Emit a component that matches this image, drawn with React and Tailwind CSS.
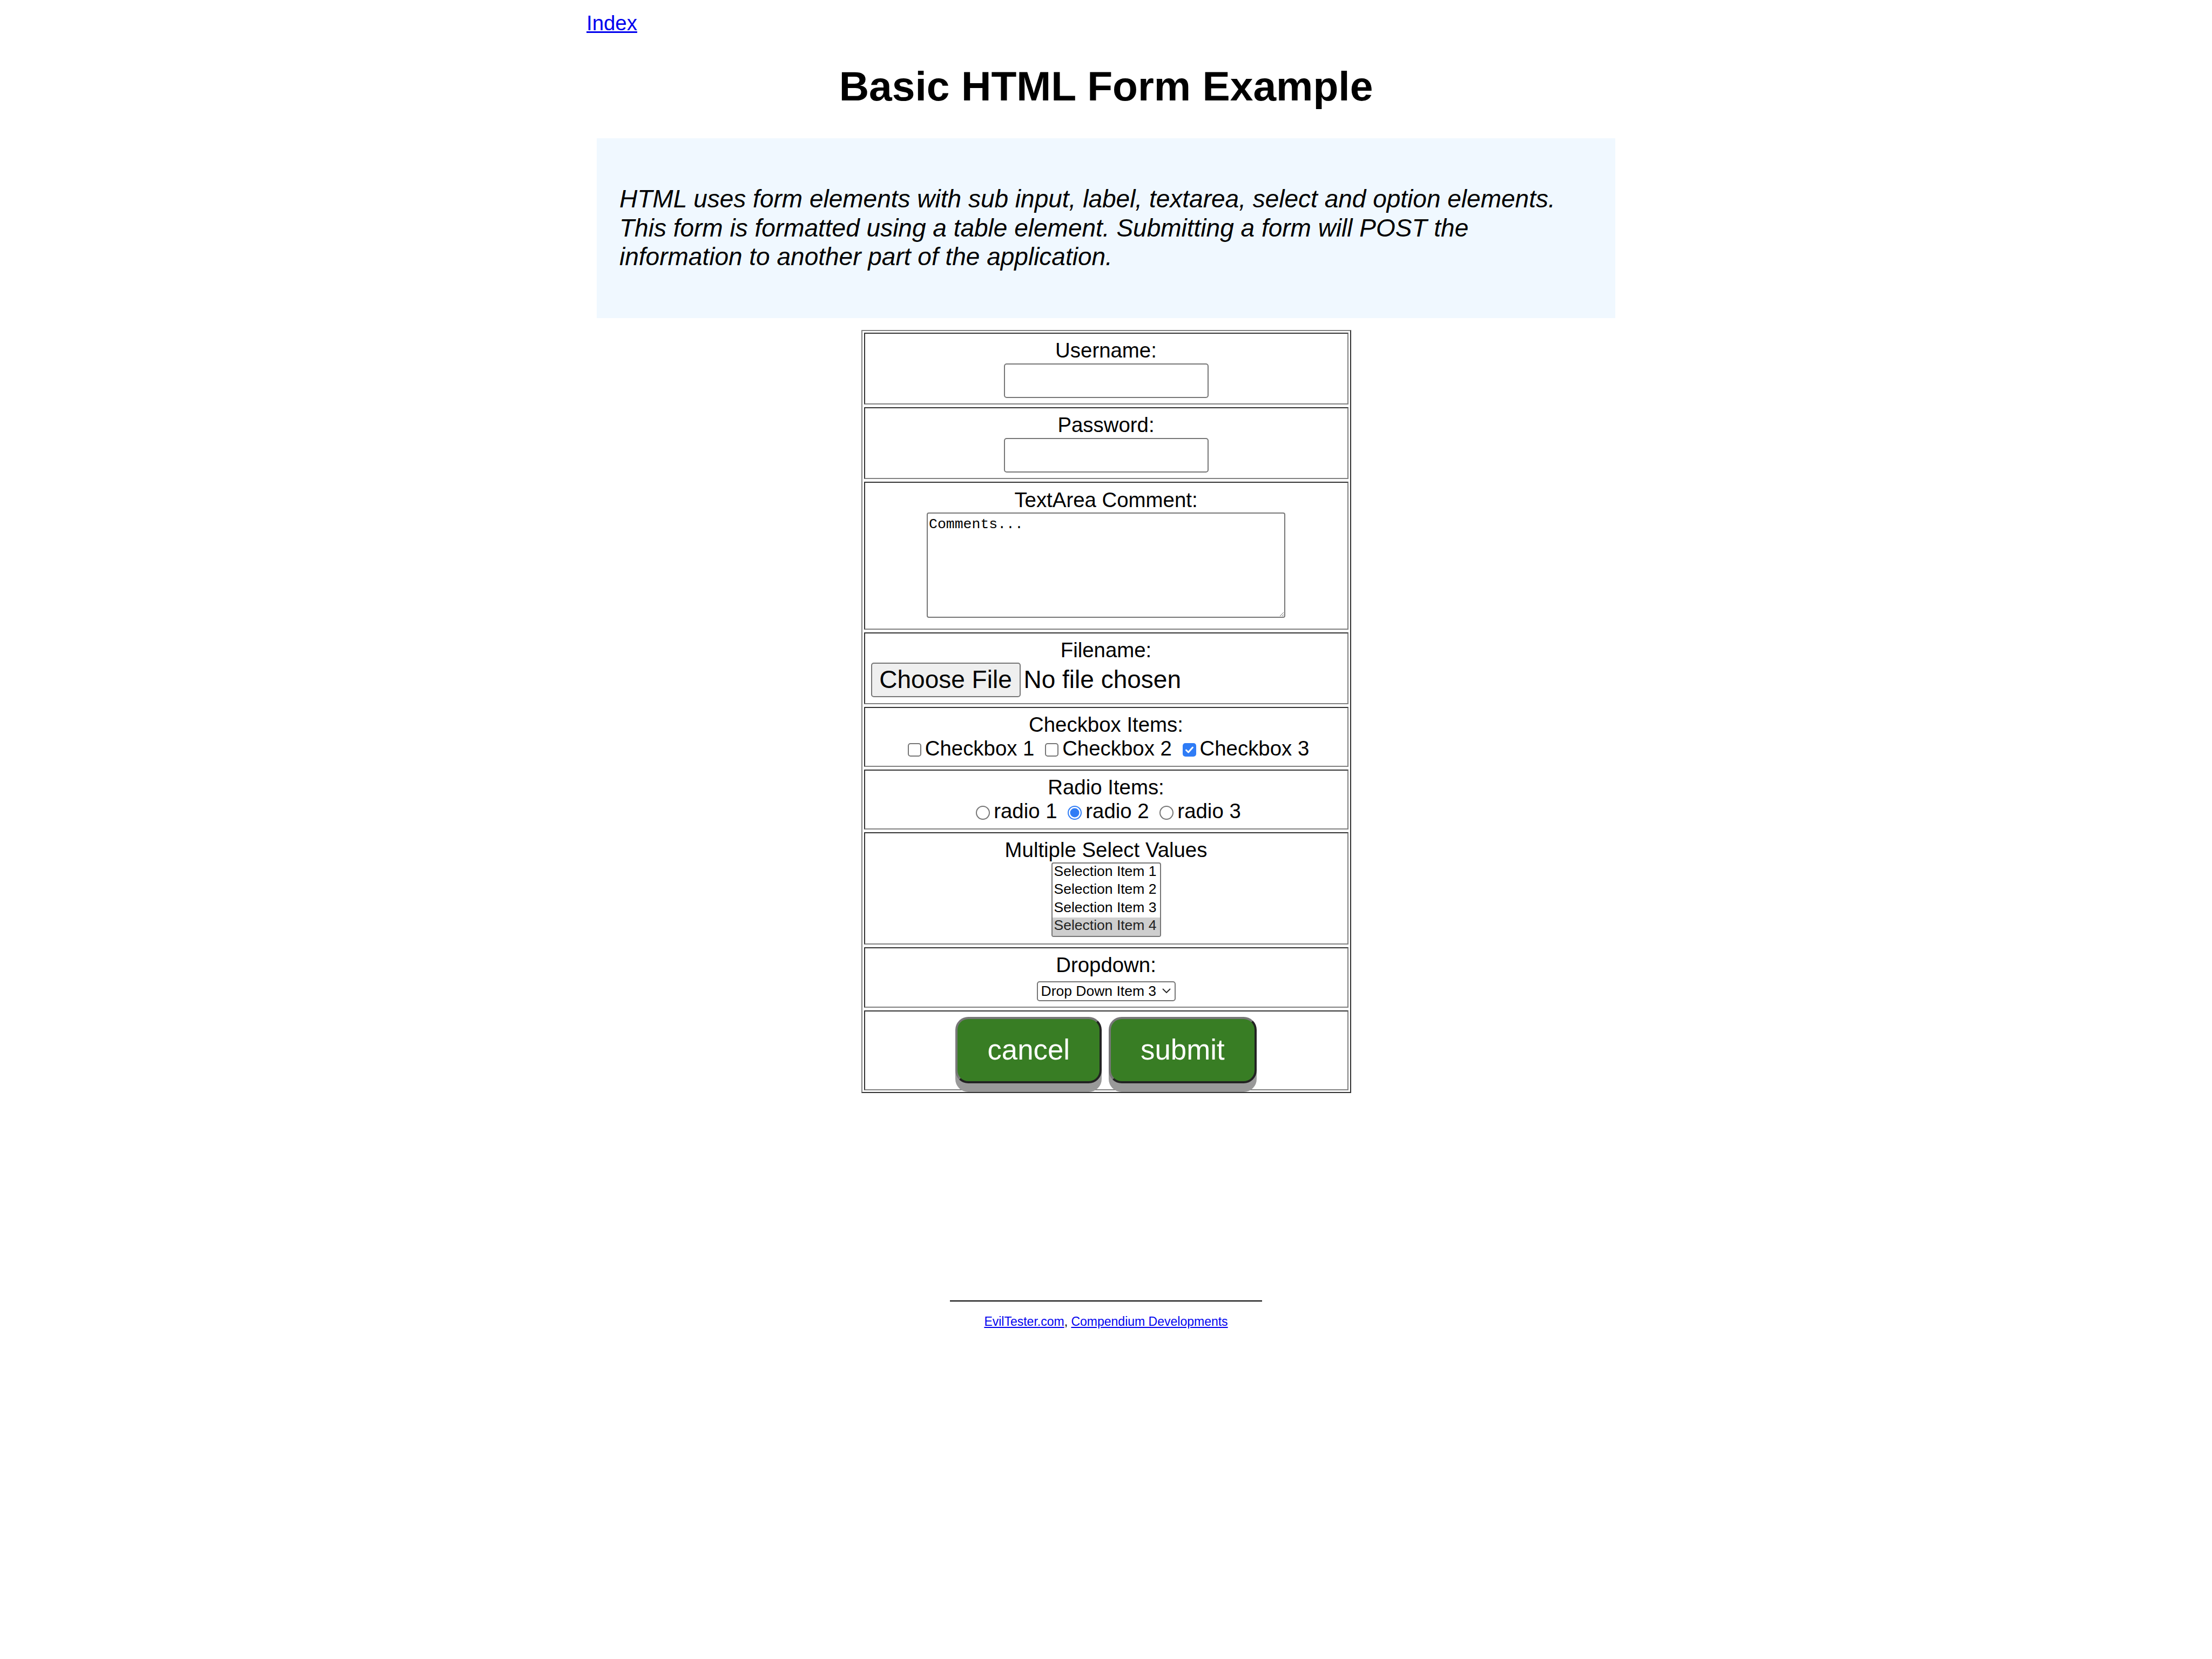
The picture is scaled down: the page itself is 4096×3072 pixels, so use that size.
import React from 'react';

const Checkbox = ({ checked }) => (
  <svg width="25" height="25" viewBox="0 0 25 25" className="inline-block ml-[9px] mr-[7px]">
    {checked ? (
      <>
        <rect x="0" y="0" width="25" height="25" rx="5" fill="#2f7cf6" />
        <path d="M6.5 13 L10.5 17 L18.5 8" fill="none" stroke="#fff" strokeWidth="3" strokeLinecap="round" strokeLinejoin="round" />
      </>
    ) : (
      <rect x="1" y="1" width="23" height="23" rx="4" fill="#fff" stroke="#767676" strokeWidth="2" />
    )}
  </svg>
);

const Radio = ({ checked }) => (
  <svg width="26" height="26" viewBox="0 0 26 26" className="inline-block ml-[9px] mr-[7px]">
    {checked ? (
      <>
        <circle cx="13" cy="13" r="12" fill="#fff" stroke="#2f7cf6" strokeWidth="2" />
        <circle cx="13" cy="13" r="8.5" fill="#2f7cf6" />
      </>
    ) : (
      <circle cx="13" cy="13" r="12" fill="#fff" stroke="#767676" strokeWidth="2" />
    )}
  </svg>
);

const Cell = ({ className, children }) => (
  <div
    className={
      'flex flex-col items-center border-2 border-t-[#333] border-l-[#333] border-b-[#808080] border-r-[#808080] text-[38.4px] leading-[44px] ' +
      className
    }
  >
    {children}
  </div>
);

const selections = ['Selection Item 1', 'Selection Item 2', 'Selection Item 3', 'Selection Item 4'];

export default function App() {
  return (
    <div className="min-h-screen bg-white pt-[21px] pb-[40px] font-['Liberation_Sans',Arial,Helvetica,sans-serif] text-black">
      <div className="w-[1930px] mx-auto">
        <div className="pl-[3px] text-[38.4px] leading-[44px]">
          <a href="#" className="text-[#0000ee] underline">Index</a>
        </div>

        <h1 className="mt-[50px] text-center text-[76.8px] leading-[88px] font-bold">Basic HTML Form Example</h1>

        <div className="mt-[53px] mx-[22px] bg-[#f0f8ff] pt-[86px] pb-[86px] px-[42px] text-[46px] leading-[53.6px] italic">
          <p>
            HTML uses form elements with sub input, label, textarea, select and option elements.
            <br />
            This form is formatted using a table element. Submitting a form will POST the
            <br />
            information to another part of the application.
          </p>
        </div>

        <form className="w-[907px] mx-auto mt-[22px] border-2 border-t-[#808080] border-l-[#808080] border-b-[#333] border-r-[#333] p-[3px] flex flex-col gap-[5px]">
          <Cell className="h-[133px] pt-[9px]">
            <span>Username:</span>
            <input type="text" className="mt-[2px] w-[379px] h-[64px] border-2 border-[#767676] rounded-[5px] bg-white px-[5px] text-[46px]" />
          </Cell>

          <Cell className="h-[133px] pt-[9px]">
            <span>Password:</span>
            <input type="password" className="mt-[2px] w-[379px] h-[64px] border-2 border-[#767676] rounded-[5px] bg-white px-[5px] text-[46px]" />
          </Cell>

          <Cell className="h-[274px] pt-[10px]">
            <span>TextArea Comment:</span>
            <textarea
              defaultValue="Comments..."
              className="mt-[1px] w-[664px] h-[195px] border-2 border-[#767676] rounded-[4px] bg-white pt-[5px] pl-[2px] font-['Liberation_Mono','Courier_New',monospace] text-[26.5px] leading-[30px]"
            />
          </Cell>

          <Cell className="h-[133px] pt-[9px]">
            <span>Filename:</span>
            <div className="mt-[1px] self-stretch flex items-center h-[64px] pl-[11px] text-[46px] leading-[53px]">
              <button type="button" className="w-[277px] h-[64px] border-2 border-[#767676] rounded-[5px] bg-[#efefef] text-center">
                Choose File
              </button>
              <span className="ml-[6px]">No file chosen</span>
            </div>
          </Cell>

          <Cell className="h-[111px] pt-[9px]">
            <span>Checkbox Items:</span>
            <div className="text-center whitespace-nowrap">
              <Checkbox />Checkbox 1{' '}
              <Checkbox />Checkbox 2{' '}
              <Checkbox checked />Checkbox 3
            </div>
          </Cell>

          <Cell className="h-[111px] pt-[9px]">
            <span>Radio Items:</span>
            <div className="text-center whitespace-nowrap">
              <Radio />radio 1{' '}
              <Radio checked />radio 2{' '}
              <Radio />radio 3
            </div>
          </Cell>

          <Cell className="h-[208px] pt-[9px]">
            <span>Multiple Select Values</span>
            <div className="mt-[1px] w-[203px] h-[138px] border-2 border-[#767676] rounded-[4px] overflow-hidden bg-white text-[26.5px] leading-[28px]">
              {selections.map((item, i) => (
                <div
                  key={item}
                  className={i === 3 ? 'h-[33.5px] pl-[3px] bg-[#cecece] text-[#222]' : 'h-[33.5px] pl-[3px]'}
                >
                  {item}
                </div>
              ))}
            </div>
          </Cell>

          <Cell className="h-[112px] pt-[9px]">
            <span>Dropdown:</span>
            <div className="mt-[8px] w-[257px] h-[37px] flex items-center border-2 border-[#767676] rounded-[5px] bg-white pl-[6px] pr-[7px] text-[26.5px] leading-[30px]">
              <span>Drop Down Item 3</span>
              <svg width="16" height="10" viewBox="0 0 16 10" className="ml-auto">
                <path d="M1.5 1.5 L8 8 L14.5 1.5" fill="none" stroke="#222" strokeWidth="1.8" strokeLinecap="round" strokeLinejoin="round" />
              </svg>
            </div>
          </Cell>

          <Cell className="h-[148px] pt-[10px]">
            <div className="flex gap-[13px]">
              <button
                type="button"
                className="h-[123px] px-[55px] border-4 border-t-[#777] border-l-[#777] border-b-[#222] border-r-[#222] rounded-[24px] bg-[#387d24] text-white text-[52.8px] leading-[60px] shadow-[0_16px_0_#999]"
              >
                cancel
              </button>
              <button
                type="button"
                className="h-[123px] px-[55px] border-4 border-t-[#777] border-l-[#777] border-b-[#222] border-r-[#222] rounded-[24px] bg-[#387d24] text-white text-[52.8px] leading-[60px] shadow-[0_16px_0_#999]"
              >
                submit
              </button>
            </div>
          </Cell>
        </form>

        <div className="mt-[384px] w-[578px] mx-auto border-t-2 border-black" />
        <p className="mt-[24px] text-center text-[23px] leading-[26px]">
          <a href="#" className="text-[#0000ee] underline">EvilTester.com</a>,{' '}
          <a href="#" className="text-[#0000ee] underline">Compendium Developments</a>
        </p>
      </div>
    </div>
  );
}
